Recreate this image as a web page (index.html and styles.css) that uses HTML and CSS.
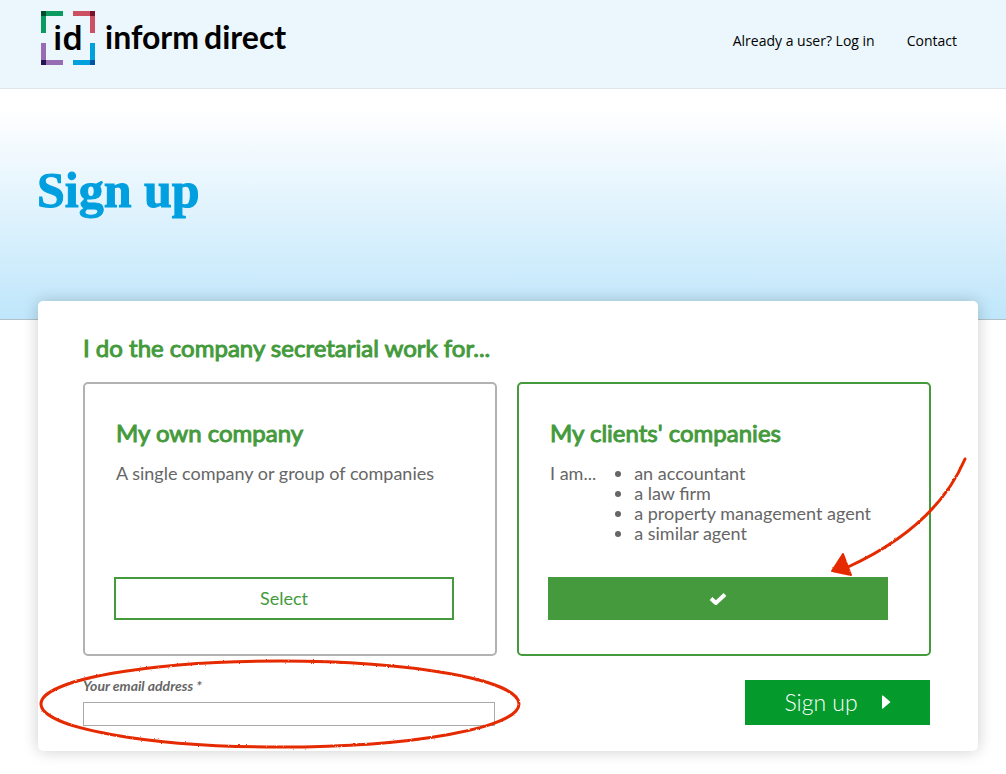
FILE: index.html
```html
<!DOCTYPE html>
<html lang="en">
<head>
<meta charset="utf-8">
<meta name="viewport" content="width=device-width, initial-scale=1">
<title>Sign up - Inform Direct</title>
<link rel="stylesheet" href="styles.css">
</head>
<body>
<header class="topbar">
  <a class="brand" href="#">
    <span class="brand-mark">
      <svg class="brand-frame" viewBox="0 0 54 54" aria-hidden="true">
        <path fill="#0b9a60" d="M0 0h22v5H5v17H0z"/><path fill="#004d2e" d="M0 0h5v5H0z"/>
        <path fill="#cc5062" d="M32 0h22v22h-5V5H32z"/><path fill="#7a1128" d="M49 0h5v5h-5z"/>
        <path fill="#966cb2" d="M0 32h5v17h17v5H0z"/><path fill="#241454" d="M0 49h5v5H0z"/>
        <path fill="#00a0df" d="M49 32h5v22H32v-5h17z"/><path fill="#0053a0" d="M49 49h5v5h-5z"/>
      </svg>
      <span class="brand-id">id</span>
    </span>
    <span class="brand-name"><span>inform</span> <span>direct</span></span>
  </a>
  <nav class="nav">
    <a href="#">Already a user? Log in</a>
    <a href="#">Contact</a>
  </nav>
</header>
<section class="hero"><h1 class="hero-title">Sign up</h1></section>
<main class="card">
  <h2 class="heading">I do the company secretarial work for...</h2>
  <div class="options">
    <section class="option">
      <h3 class="heading option-title">My own company</h3>
      <p class="option-text">A single company or group of companies</p>
      <button class="choose" type="button">Select</button>
    </section>
    <section class="option option-selected">
      <h3 class="heading option-title">My clients' companies</h3>
      <div class="option-text">
        <span>I am...</span>
        <ul class="agents">
          <li>an accountant</li>
          <li>a law firm</li>
          <li>a property management agent</li>
          <li>a similar agent</li>
        </ul>
      </div>
      <button class="choose choose-active" type="button" aria-label="Selected">
        <svg width="18" height="14" viewBox="0 0 18 14" aria-hidden="true"><path fill="none" stroke="#fff" stroke-width="4" stroke-linejoin="round" d="M2 6.500 6.800 11 16 2.500"/></svg>
      </button>
      <svg class="arrow" viewBox="0 0 140 122" aria-hidden="true">
        <defs><filter id="rough" x="-5%" y="-5%" width="110%" height="110%"><feTurbulence type="fractalNoise" baseFrequency="0.4" numOctaves="2" seed="4"/><feDisplacementMap in="SourceGraphic" scale="2" xChannelSelector="R" yChannelSelector="G"/></filter></defs>
        <g filter="url(#rough)">
          <path class="ink" d="M136 4C118 46 80 84 19 112"/>
          <path class="ink-fill" d="M14 99 3 116l19 4z"/>
        </g>
      </svg>
    </section>
  </div>
  <form class="form">
    <div class="field">
      <label class="label" for="email">Your email address *</label>
      <input class="input" id="email" type="email">
      <svg class="ring" viewBox="0 0 484 92" aria-hidden="true">
        <defs><filter id="rough-ring" x="-2%" y="-5%" width="104%" height="110%"><feTurbulence type="fractalNoise" baseFrequency="0.4" numOctaves="2" seed="7"/><feDisplacementMap in="SourceGraphic" scale="2" xChannelSelector="R" yChannelSelector="G"/></filter></defs>
        <ellipse class="ink" cx="242" cy="46" rx="239" ry="43" filter="url(#rough-ring)"/>
      </svg>
    </div>
    <button class="submit" type="button">
      <span>Sign up</span>
      <svg width="9" height="14" viewBox="0 0 9 14" aria-hidden="true"><path fill="#fff" d="M0 1Q0 0 1 .6L8.500 7 1 13.400Q0 14 0 13z"/></svg>
    </button>
  </form>
</main>
</body>
</html>
```
FILE: styles.css
```css
* { box-sizing: border-box; }
body { margin: 0; background: #fff; color: #666; font-family: Lato, sans-serif; font-size: 18px; line-height: 20px; }
h1, h2, h3, p, ul { margin: 0; padding: 0; }
.topbar { display: flex; justify-content: space-between; height: 89px; padding: 11px 49px 0 41px; background: #ebf7fd; border-bottom: 1px solid #dfe5e8; }
.brand { display: flex; gap: 10px; height: 54px; color: #000; text-decoration: none; }
.brand-mark { display: grid; width: 54px; height: 54px; place-items: center; }
.brand-frame, .brand-id { grid-area: 1 / 1; }
.brand-frame { width: 54px; height: 54px; }
.brand-id { font: 600 33px/54px "Noto Sans", sans-serif; }
.brand-name { display: flex; gap: 5px; font: 700 32px/52px Lato, sans-serif; }
.nav { display: flex; gap: 32px; padding-top: 20px; font: 14px/20px "Open Sans", sans-serif; }
.nav a { color: #000; text-decoration: none; }
.hero { height: 231px; padding: 69px 37px 0; background: linear-gradient(#fff 8%, #bfe6fb); border-bottom: 1px solid #b3c0c7; }
.hero-title { color: #009fdf; font: 700 50px/64px "Liberation Serif", serif; -webkit-text-stroke: 1px #009fdf; }
.card { position: relative; margin: -19px 28px 23px 38px; padding: 31px 47px 25px 45px; background: #fff; border-radius: 5px; box-shadow: 0 0 16px rgba(0, 0, 0, .2); }
.heading { color: #449a3c; font-size: 24px; font-weight: 400; line-height: 32px; -webkit-text-stroke: 1px #449a3c; }
.options { display: grid; grid-template-columns: 1fr 1fr; gap: 20px; margin-top: 18px; }
.option { position: relative; display: flex; flex-direction: column; min-height: 274px; padding: 33px 41px 34px 29px; border: 2px solid #b2b2b2; border-radius: 5px; }
.option-selected { border-color: #449a3c; }
.option-title { padding-left: 2px; }
.option-text { display: flex; gap: 38px; padding: 14px 0 32px 2px; }
.agents { list-style: disc; }
.choose { display: flex; align-items: center; justify-content: center; height: 43px; margin-top: auto; padding: 0 0 2px; border: 2px solid #449a3c; background: #fff; color: #449a3c; font: 18px/20px Lato, sans-serif; }
.choose-active { padding: 0; background: #449a3c; }
.form { display: flex; justify-content: space-between; align-items: flex-start; margin-top: 24px; }
.field { position: relative; display: flex; flex-direction: column; flex: 0 1 412px; }
.label { font-size: 14px; font-style: italic; font-weight: 700; line-height: 12px; margin-bottom: 10px; }
.input { height: 24px; border: 1px solid #aaa; background: #fff; }
.submit { display: flex; align-items: center; justify-content: center; gap: 24px; width: 185px; height: 45px; margin-right: 1px; padding: 0 0 2px; border: 0; background: #049a2c; color: #fff; font: 300 23px/28px Lato, sans-serif; }
.ink { fill: none; stroke: #e52a00; stroke-width: 3; stroke-linecap: round; }
.ink-fill { fill: #e52a00; stroke: #e52a00; stroke-width: 2; stroke-linejoin: round; }
.arrow { position: absolute; top: 71px; right: -40px; width: 140px; height: 122px; pointer-events: none; }
.ring { position: absolute; top: -22px; left: -45px; width: 484px; height: 92px; pointer-events: none; }
```
